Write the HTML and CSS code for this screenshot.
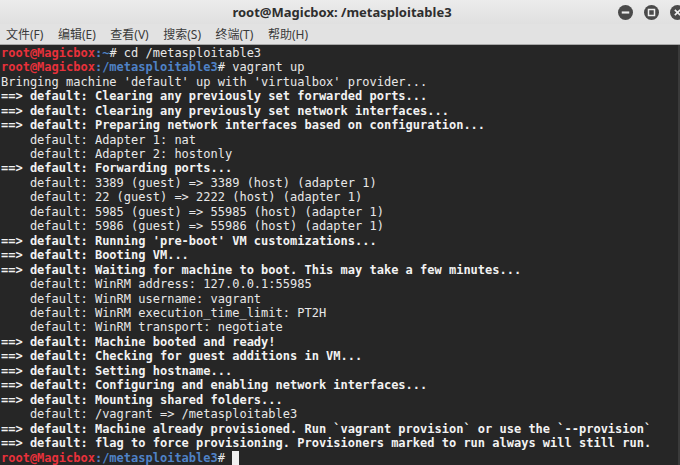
FILE: index.html
```html
<!DOCTYPE html>
<html lang="zh-CN">
<head>
    <meta charset="UTF-8">
    <title>root@Magicbox: /metasploitable3</title>
    <link rel="stylesheet" href="styles.css">
</head>
<body>
    <div class="window">
        <div class="titlebar">
            <span class="title">root@Magicbox: /metasploitable3</span>
            <div class="controls">
                <span class="btn"><svg width="15" height="15" viewBox="0 0 14 14"><circle cx="7" cy="7" r="7" fill="#4a4a4a"/><rect x="3.5" y="6" width="7" height="2" fill="#eee"/></svg></span>
                <span class="btn"><svg width="15" height="15" viewBox="0 0 14 14"><circle cx="7" cy="7" r="7" fill="#4a4a4a"/><rect x="4.2" y="4.2" width="5.6" height="5.6" fill="none" stroke="#eee" stroke-width="1.4"/></svg></span>
                <span class="btn"><svg width="15" height="15" viewBox="0 0 14 14"><circle cx="7" cy="7" r="7" fill="#4a4a4a"/><path d="M4.5 4.5 L9.5 9.5 M9.5 4.5 L4.5 9.5" stroke="#eee" stroke-width="1.5"/></svg></span>
            </div>
        </div>
        <div class="menubar">
            <span>文件(F)</span>
            <span>编辑(E)</span>
            <span>查看(V)</span>
            <span>搜索(S)</span>
            <span>终端(T)</span>
            <span>帮助(H)</span>
        </div>
        <pre class="term"><span class="u">root@Magicbox</span><span class="p">:~</span># cd /metasploitable3
<span class="u">root@Magicbox</span><span class="p">:/metasploitable3</span># vagrant up
Bringing machine 'default' up with 'virtualbox' provider...
<b>==&gt; default: Clearing any previously set forwarded ports...</b>
<b>==&gt; default: Clearing any previously set network interfaces...</b>
<b>==&gt; default: Preparing network interfaces based on configuration...</b>
    default: Adapter 1: nat
    default: Adapter 2: hostonly
<b>==&gt; default: Forwarding ports...</b>
    default: 3389 (guest) =&gt; 3389 (host) (adapter 1)
    default: 22 (guest) =&gt; 2222 (host) (adapter 1)
    default: 5985 (guest) =&gt; 55985 (host) (adapter 1)
    default: 5986 (guest) =&gt; 55986 (host) (adapter 1)
<b>==&gt; default: Running 'pre-boot' VM customizations...</b>
<b>==&gt; default: Booting VM...</b>
<b>==&gt; default: Waiting for machine to boot. This may take a few minutes...</b>
    default: WinRM address: 127.0.0.1:55985
    default: WinRM username: vagrant
    default: WinRM execution_time_limit: PT2H
    default: WinRM transport: negotiate
<b>==&gt; default: Machine booted and ready!</b>
<b>==&gt; default: Checking for guest additions in VM...</b>
<b>==&gt; default: Setting hostname...</b>
<b>==&gt; default: Configuring and enabling network interfaces...</b>
<b>==&gt; default: Mounting shared folders...</b>
    default: /vagrant =&gt; /metasploitable3
<b>==&gt; default: Machine already provisioned. Run `vagrant provision` or use the `--provision`</b>
<b>==&gt; default: flag to force provisioning. Provisioners marked to run always will still run.</b>
<span class="u">root@Magicbox</span><span class="p">:/metasploitable3</span># <span class="cursor"> </span></pre>
    </div>
</body>
</html>
```
FILE: styles.css
```css
html, body {
    margin: 0;
    padding: 0;
    background: #262626;
    overflow: hidden;
}
.window {
    width: 680px;
    height: 465px;
    display: flex;
    flex-direction: column;
}
.titlebar {
    height: 24px;
    background: linear-gradient(#ececec, #e0e0e0);
    display: flex;
    align-items: center;
    justify-content: center;
    position: relative;
}
.title {
    font-family: 'Noto Sans', sans-serif;
    font-size: 13px;
    font-weight: bold;
    color: #2e2e2e;
    margin-left: 4px;
}
.controls {
    position: absolute;
    right: -5px;
    top: 5px;
    display: flex;
    gap: 11px;
}
.btn svg {
    display: block;
}
.menubar {
    height: 20px;
    background: #e2e2e2;
    border-bottom: 1px solid #a8a8a8;
    display: flex;
    align-items: center;
    gap: 14.5px;
    padding-left: 6px;
    font-family: 'Noto Sans', 'Noto Sans CJK SC', sans-serif;
    font-size: 12px;
    color: #3a3a3a;
}
.term {
    flex: 1;
    margin: 0;
    padding: 1px 0 0 1px;
    background: #262626;
    color: #e8e8e8;
    font-family: 'DejaVu Sans Mono', monospace;
    font-size: 12px;
    line-height: 14.46px;
    border-right: 2px solid #3a3a3a;
}
.term b {
    font-weight: bold;
    color: #f2f2f2;
}
.u {
    color: #e8313b;
    font-weight: bold;
}
.p {
    color: #4f82c6;
    font-weight: bold;
}
.cursor {
    background: #f0f0f0;
}
```
